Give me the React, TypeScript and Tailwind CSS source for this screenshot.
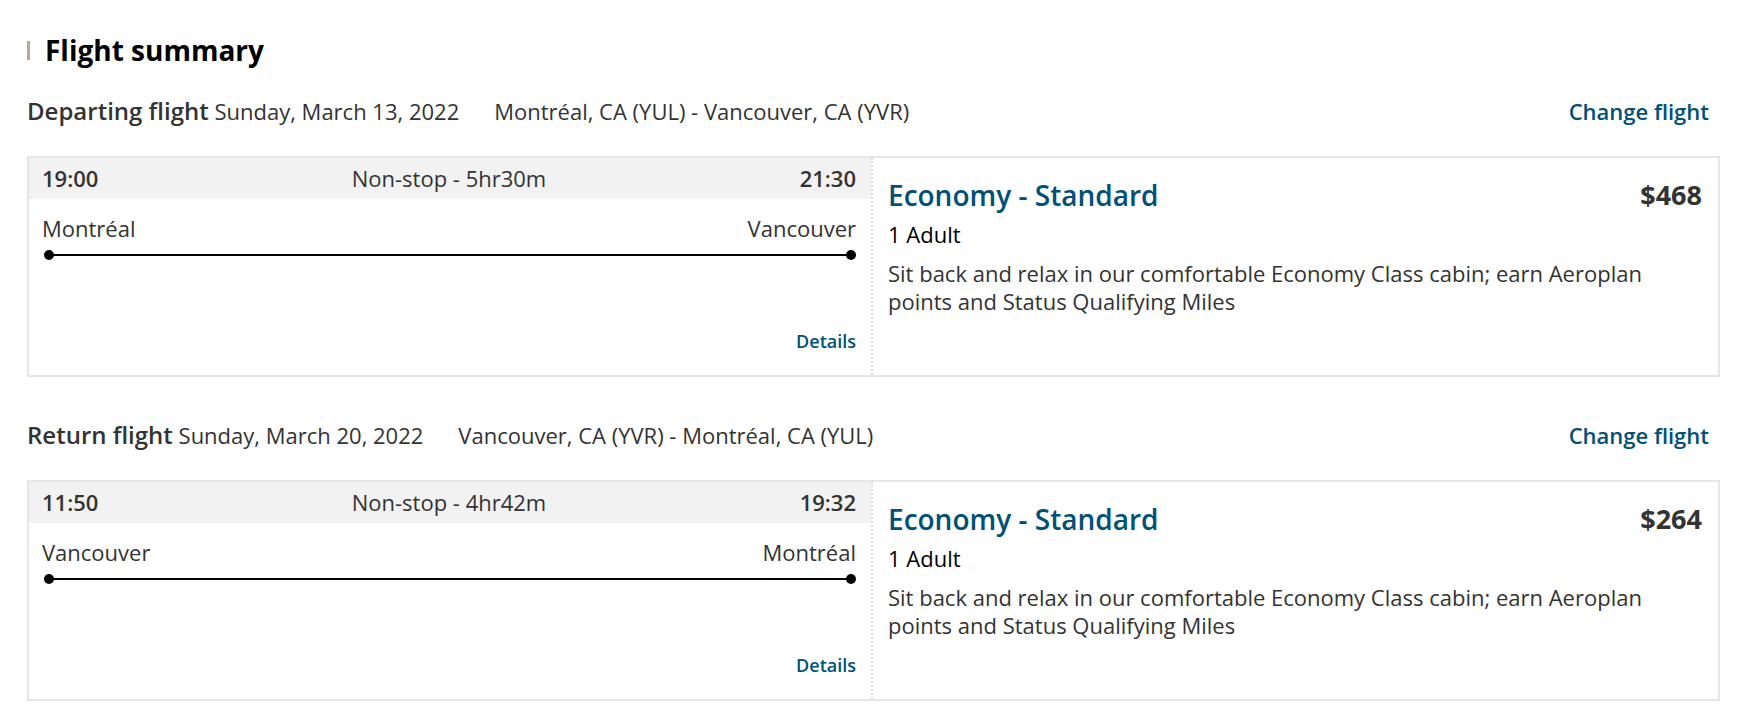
const flights = [
  {
    label: "Departing flight",
    date: "Sunday, March 13, 2022",
    route: "Montréal, CA (YUL) - Vancouver, CA (YVR)",
    dep: "19:00",
    arr: "21:30",
    duration: "Non-stop - 5hr30m",
    from: "Montréal",
    to: "Vancouver",
    price: "$468",
  },
  {
    label: "Return flight",
    date: "Sunday, March 20, 2022",
    route: "Vancouver, CA (YVR) - Montréal, CA (YUL)",
    dep: "11:50",
    arr: "19:32",
    duration: "Non-stop - 4hr42m",
    from: "Vancouver",
    to: "Montréal",
    price: "$264",
  },
];

type Flight = (typeof flights)[number];

function FlightBlock({ f }: { f: Flight }) {
  return (
    <section className="mb-[41px]">
      {/* header line */}
      <div className="flex items-center justify-between h-[34px] mb-[28px]">
        <p className="text-[22px] text-[#333]">
          <span className="font-semibold text-[24px]">{f.label}</span> {f.date}
          <span className="ml-[35px]">{f.route}</span>
        </p>
        <a className="text-[22px] font-semibold text-[#005078] mr-[11px]">Change flight</a>
      </div>

      {/* card */}
      <div className="flex border-2 border-[#e6e6e6] h-[221px]">
        <div className="w-[842px] flex flex-col">
          <div className="h-[41px] bg-[#f2f2f2] flex items-center justify-between pl-[13px] pr-[15px] text-[22px]">
            <span className="font-semibold w-[120px]">{f.dep}</span>
            <span>{f.duration}</span>
            <span className="font-semibold w-[120px] text-right">{f.arr}</span>
          </div>
          <div className="flex justify-between pl-[13px] pr-[15px] pt-[14px] text-[22px] leading-[30px]">
            <span>{f.from}</span>
            <span>{f.to}</span>
          </div>
          <div className="relative mx-[20px] mt-[11px] h-[2px] bg-black">
            <span className="absolute -left-[5px] -top-[4px] w-[10px] h-[10px] rounded-full bg-black" />
            <span className="absolute -right-[5px] -top-[4px] w-[10px] h-[10px] rounded-full bg-black" />
          </div>
          <div className="mt-auto pb-[21px] pl-[13px] pr-[15px] text-right leading-[24px]">
            <a className="text-[18px] font-semibold text-[#005078]">Details</a>
          </div>
        </div>
        <div className="flex-1 border-l-2 border-dotted border-[#dcdcdc] pl-[15px] pr-[16px] pt-[19px]">
          <div className="flex items-center justify-between">
            <h3 className="text-[28px] font-semibold text-[#005078] leading-[36px]">Economy - Standard</h3>
            <span className="text-[27px] font-bold text-[#333] leading-[36px]">{f.price}</span>
          </div>
          <p className="text-[22px] text-black leading-[28px] mt-[7px]">1 Adult</p>
          <p className="text-[22px] text-[#333] leading-[28px] mt-[11px] max-w-[790px]">
            Sit back and relax in our comfortable Economy Class cabin; earn Aeroplan points and Status Qualifying Miles
          </p>
        </div>
      </div>
    </section>
  );
}

export default function App() {
  return (
    <div className="min-h-screen bg-white font-['Open_Sans',sans-serif] text-[#333] pl-[27px] pr-[34px] pt-[31px]">
      <h1 className="flex items-center h-[38px] mb-[25px]">
        <span className="w-[3px] h-[19px] bg-[#b8a898] mr-[15px]" />
        <span className="text-[28px] font-bold text-black">Flight summary</span>
      </h1>
      {flights.map((f) => (
        <FlightBlock key={f.label} f={f} />
      ))}
    </div>
  );
}
